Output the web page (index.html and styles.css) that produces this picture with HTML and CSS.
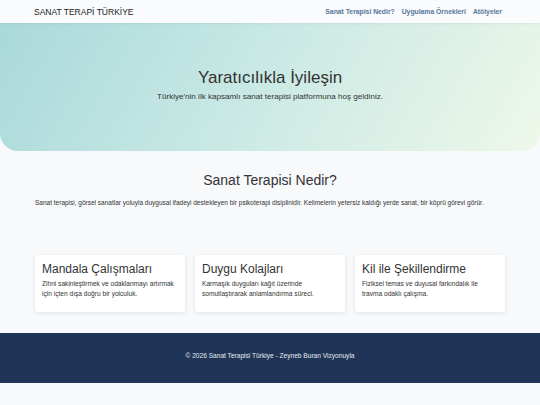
FILE: index.html
```html
<!DOCTYPE html>
<html lang="tr">
  <head>
    <meta charset="utf-8">
    <title>Sanat Terapi Türkiye</title>
    <link rel="stylesheet" href="styles.css">
  </head>
  <body>
    <header class="nav">
      <div class="nav-inner">
        <div class="brand">SANAT TERAPİ TÜRKİYE</div>
        <nav class="links">
          <a href="#nedir">Sanat Terapisi Nedir?</a>
          <a href="#ornekler">Uygulama Örnekleri</a>
          <a href="#atolyeler">Atölyeler</a>
        </nav>
      </div>
    </header>

    <section class="hero">
      <h1>Yaratıcılıkla İyileşin</h1>
      <p>Türkiye'nin ilk kapsamlı sanat terapisi platformuna hoş geldiniz.</p>
    </section>

    <section class="about" id="nedir">
      <h2>Sanat Terapisi Nedir?</h2>
      <p>Sanat terapisi, görsel sanatlar yoluyla duygusal ifadeyi destekleyen bir psikoterapi disiplinidir. Kelimelerin yetersiz kaldığı yerde sanat, bir köprü görevi görür.</p>
    </section>

    <section class="cards" id="ornekler">
      <div class="card">
        <h3>Mandala Çalışmaları</h3>
        <p>Zihni sakinleştirmek ve odaklanmayı artırmak için içten dışa doğru bir yolculuk.</p>
      </div>
      <div class="card">
        <h3>Duygu Kolajları</h3>
        <p>Karmaşık duyguları kağıt üzerinde somutlaştırarak anlamlandırma süreci.</p>
      </div>
      <div class="card">
        <h3>Kil ile Şekillendirme</h3>
        <p>Fiziksel temas ve duyusal farkındalık ile travma odaklı çalışma.</p>
      </div>
    </section>

    <footer class="footer">
      <p>© 2026 Sanat Terapisi Türkiye - Zeyneb Buran Vizyonuyla</p>
    </footer>
  </body>
</html>
```

FILE: styles.css
```css
body{
    margin: 0;
    background: #f7f9fb;
    font-family: "Liberation Sans", Arial, sans-serif;
    color: #333;
}
.nav{
    height: 23px;
    background: #f9fbfc;
    box-shadow: 0 1px 2px rgba(0,0,0,0.06);
    position: relative;
    z-index: 1;
}
.nav-inner{
    height: 100%;
    padding: 0 38px 0 34px;
    display: flex;
    align-items: center;
    justify-content: space-between;
}
.brand{
    font-size: 8.5px;
    color: #222;
}
.links{
    display: flex;
    gap: 7px;
}
.links a{
    font-size: 6.8px;
    font-weight: bold;
    color: #56789a;
    text-decoration: none;
}
.hero{
    height: 128px;
    box-sizing: border-box;
    padding-bottom: 6px;
    background: linear-gradient(120deg, #a9d9da 0%, #c8e8e4 45%, #eef8ea 100%);
    border-radius: 0 0 18px 18px;
    display: flex;
    flex-direction: column;
    align-items: center;
    justify-content: center;
    text-align: center;
}
.hero h1{
    margin: 0 0 4px;
    font-size: 17px;
    font-weight: normal;
    color: #333;
}
.hero p{
    margin: 0;
    font-size: 8.1px;
    color: #333;
}
.about{
    padding: 21px 35px 0;
    text-align: center;
}
.about h2{
    margin: 0 0 11px;
    font-size: 14px;
    font-weight: normal;
    color: #333;
}
.about p{
    margin: 0;
    font-size: 6.5px;
    text-align: left;
    color: #333;
}
.cards{
    display: flex;
    gap: 10px;
    padding: 49px 35px 21px;
}
.card{
    flex: 1;
    height: 57px;
    box-sizing: border-box;
    padding: 7px 7px;
    background: #fff;
    border-radius: 3px;
    box-shadow: 0 1px 4px rgba(0,0,0,0.1);
}
.card h3{
    margin: 0 0 3px;
    font-size: 12px;
    font-weight: normal;
    color: #333;
}
.card p{
    margin: 0;
    font-size: 6.6px;
    line-height: 9.5px;
    color: #333;
}
.footer{
    height: 50px;
    background: #1f3457;
    display: flex;
    align-items: center;
    justify-content: center;
}
.footer p{
    margin: 0 0 6px;
    font-size: 6.6px;
    color: #e6ebf2;
}
```
